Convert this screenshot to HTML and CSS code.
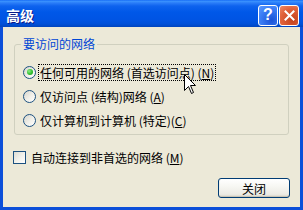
FILE: index.html
```html
<!DOCTYPE html>
<html lang="zh-CN">
<head>
<meta charset="utf-8">
<title>高级</title>
<link rel="stylesheet" href="styles.css">
</head>
<body>
<div class="window">
  <div class="titlebar">
    <span class="title">高级</span>
    <div class="caption-buttons">
      <span class="cbtn help">?</span>
      <span class="cbtn close">
        <svg width="11" height="11" viewBox="0 0 11 11"><path d="M1.5 1.5 L9.5 9.5 M9.5 1.5 L1.5 9.5" stroke="#fff" stroke-width="2" stroke-linecap="square"/></svg>
      </span>
    </div>
  </div>
  <div class="frame">
    <fieldset class="group">
      <legend class="group-label">要访问的网络</legend>
      <div class="radio-row">
        <span class="radio checked"></span>
        <span class="label focus">任何可用的网络 (首选访问点) (<u>N</u>)</span>
      </div>
      <div class="radio-row">
        <span class="radio"></span>
        <span class="label">仅访问点 (结构)网络 (<u>A</u>)</span>
      </div>
      <div class="radio-row">
        <span class="radio"></span>
        <span class="label">仅计算机到计算机 (特定)(<u>C</u>)</span>
      </div>
    </fieldset>
    <div class="check-row">
      <span class="checkbox"></span>
      <span class="label">自动连接到非首选的网络 (<u>M</u>)</span>
    </div>
    <div class="button-row">
      <button class="btn">关闭</button>
    </div>
  </div>
  <svg class="cursor" width="13" height="21" viewBox="0 0 13 21"><path d="M0.5 0.5 L0.5 16.5 L4.5 12.5 L7.5 19.5 L9.5 18.5 L6.5 11.5 L11.5 11.5 Z" fill="#fff" stroke="#000" stroke-width="1"/></svg>
</div>
</body>
</html>
```

FILE: styles.css
```css
* { box-sizing: border-box; }
html, body { margin: 0; padding: 0; background: #ece9d8; }
body { font-family: "Noto Sans CJK SC", "Noto Sans", sans-serif; font-size: 12px; color: #000; }

.window {
  position: relative;
  width: 303px;
  height: 210px;
  display: flex;
  flex-direction: column;
  overflow: hidden;
}

.titlebar {
  height: 27px;
  flex: none;
  display: flex;
  align-items: center;
  justify-content: space-between;
  padding: 0 4px 0 6px;
  background: linear-gradient(to bottom, #0a5ef2 0px, #3d95ff 1px, #2a7cf8 3px, #0e63ee 6px, #0058e8 12px, #0054e3 20px, #0050d8 24px, #0044bd 27px);
}

.title {
  color: #fff;
  font-weight: bold;
  font-size: 14px;
  line-height: 14px;
  margin-top: 3px;
  text-shadow: 1px 1px 0 #0a1a8a;
}

.caption-buttons {
  display: flex;
  gap: 1px;
  margin-top: 3px;
}

.cbtn {
  width: 20px;
  height: 21px;
  border: 1px solid #fff;
  border-radius: 3px;
  display: flex;
  align-items: center;
  justify-content: center;
}

.help {
  background: radial-gradient(circle at 70% 75%, #1b52d6 0, #3c7ef5 60%, #5f9cff 100%);
  color: #fff;
  font-family: "Liberation Sans", sans-serif;
  font-weight: bold;
  font-size: 16px;
  line-height: 16px;
}

.close {
  background: radial-gradient(circle at 70% 75%, #c4421c 0, #e0613a 60%, #ee8a66 100%);
}

.frame {
  flex: 1;
  border: 3px solid #0b4fd9;
  border-top: 0;
  background: #ece9d8;
  padding: 11px 10px 0 11px;
  display: flex;
  flex-direction: column;
}

.group {
  margin: 0;
  padding: 10px 0 2px 6px;
  border: 1px solid #d0d0bf;
  border-radius: 3px;
  width: 275px;
  min-width: 0;
}

.group-label {
  color: #0046d5;
  padding: 0 2px;
  line-height: 12px;
  height: 12px;
}

.radio-row {
  height: 24px;
  display: flex;
  align-items: center;
  padding-left: 2px;
}

.radio {
  width: 13px;
  height: 13px;
  border-radius: 50%;
  border: 1px solid #1c5180;
  background: linear-gradient(135deg, #d6d5cc 0%, #f1f0ea 55%, #ffffff 100%);
  display: flex;
  align-items: center;
  justify-content: center;
  flex: none;
  margin-right: 2px;
}

.radio.checked::after {
  content: "";
  width: 6px;
  height: 6px;
  border-radius: 50%;
  background: radial-gradient(circle at 35% 35%, #8ced86 0, #2fbf2f 55%, #1b8f1b 100%);
}

.label {
  line-height: 15px;
  padding: 0 1px;
  border: 1px solid transparent;
  white-space: nowrap;
}

.label.focus {
  border: 1px dotted #000;
}

.check-row {
  margin-top: 14px;
  height: 16px;
  display: flex;
  align-items: center;
  margin-left: -1px;
}

.checkbox {
  width: 13px;
  height: 13px;
  border: 1px solid #1c5180;
  background: linear-gradient(135deg, #dcdcd4 0%, #f4f4ef 60%, #ffffff 100%);
  flex: none;
  margin-right: 3px;
}

.button-row {
  margin-top: 13px;
  display: flex;
  justify-content: flex-end;
}

.btn {
  width: 72px;
  height: 20px;
  padding: 0;
  font-family: inherit;
  font-size: 12px;
  color: #000;
  border: 1px solid #003c74;
  border-radius: 3px;
  background: linear-gradient(to bottom, #ffffff 0%, #f7f7f3 40%, #ecebe4 85%, #d6d0c5 100%);
  box-shadow: inset 0 -1px 0 #c9c4b4, inset 1px 0 0 #f0f0ea;
}

.cursor {
  position: absolute;
  left: 184px;
  top: 74px;
}
```
